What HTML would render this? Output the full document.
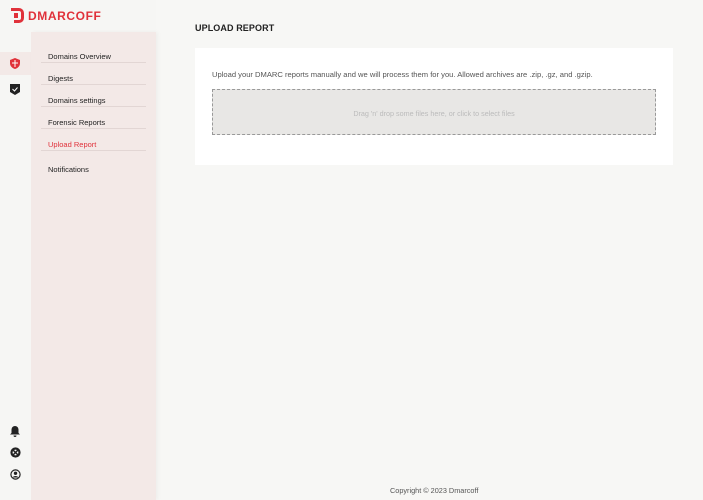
<!DOCTYPE html>
<html><head><meta charset="utf-8"><style>
*{margin:0;padding:0;box-sizing:border-box}
body{width:703px;height:500px;overflow:hidden;background:#f7f7f5;font-family:"Liberation Sans",sans-serif;position:relative;color:#333}
.logo{position:absolute;left:0;top:0;width:156px;height:32px;background:#f6f6f4}
.logo span{position:absolute;left:28px;top:9px;font-size:12px;font-weight:bold;color:#e0313a;letter-spacing:.6px}
.strip{position:absolute;left:0;top:32px;width:31px;height:468px;background:#f6f6f4}
.sub{position:absolute;left:31px;top:32px;width:125px;height:468px;background:#f3e9e7;box-shadow:2px 0 4px rgba(0,0,0,.04)}
.item{position:absolute;left:48px;font-size:7.5px;color:#222}
.line{position:absolute;left:41px;width:105px;height:1px;background:#e2d6d4}
.act{position:absolute;left:0;top:52px;width:31px;height:23px;background:#f3e9e7}
h1{position:absolute;left:195px;top:23px;font-size:9px;font-weight:bold;color:#222;letter-spacing:.1px}
.card{position:absolute;left:195px;top:48px;width:478px;height:117px;background:#fff}
.card p{position:absolute;left:17px;top:22px;font-size:7.6px;color:#555;white-space:nowrap}
.drop{position:absolute;left:17px;top:41px;width:444px;height:46px;background:#e8e7e5;border:1px dashed #999;font-size:7.2px;color:#bbb;text-align:center;line-height:47px}
.foot{position:absolute;left:390px;top:486px;font-size:7.3px;color:#555}
</style></head><body>
<div class="logo">
<svg style="position:absolute;left:11px;top:8px" width="13" height="15" viewBox="0 0 13 15"><path d="M0 0h8a5 5 0 0 1 5 5v5a5 5 0 0 1-5 5H3v-3h5a2 2 0 0 0 2-2V5a2 2 0 0 0-2-2H0z M3 5h4v5H3z" fill="#e0313a"/></svg>
<span>DMARCOFF</span></div>
<div class="strip"></div>
<div class="act"></div>
<svg style="position:absolute;left:10px;top:58px" width="10" height="11" viewBox="0 0 10 11"><path d="M5 0L10 2v3c0 3-2 5-5 6C2 10 0 8 0 5V2z" fill="#e0313a"/><path d="M5 2v7M2 5h6" stroke="#fff" stroke-width="1"/></svg>
<svg style="position:absolute;left:10px;top:84px" width="10" height="11" viewBox="0 0 10 11"><path d="M0 0h10v8l-5 3-5-3z" fill="#222"/><path d="M2.5 5l2 2 3-3.5" stroke="#fff" stroke-width="1" fill="none"/></svg>
<svg style="position:absolute;left:10px;top:426px" width="10" height="11" viewBox="0 0 10 11"><path d="M5 0a3.5 3.5 0 0 1 3.5 3.5V7L10 8.5H0L1.5 7V3.5A3.5 3.5 0 0 1 5 0z M3.5 9.5h3a1.5 1.5 0 0 1-3 0z" fill="#222"/></svg>
<svg style="position:absolute;left:10px;top:447px" width="11" height="11" viewBox="0 0 11 11"><circle cx="5.5" cy="5.5" r="4" fill="none" stroke="#222" stroke-width="2.2"/><path d="M2 2l7 7M9 2L2 9" stroke="#222" stroke-width="1.5"/></svg>
<svg style="position:absolute;left:10px;top:469px" width="11" height="11" viewBox="0 0 11 11"><circle cx="5.5" cy="5.5" r="4.6" fill="none" stroke="#222" stroke-width="1.2"/><circle cx="5.5" cy="4.3" r="1.7" fill="#222"/><path d="M2.5 8.5a3.5 3 0 0 1 6 0z" fill="#222"/></svg>
<div class="sub"></div>
<div class="item" style="top:52px">Domains Overview</div><div class="line" style="top:62px"></div>
<div class="item" style="top:74px">Digests</div><div class="line" style="top:84px"></div>
<div class="item" style="top:96px">Domains settings</div><div class="line" style="top:106px"></div>
<div class="item" style="top:118px">Forensic Reports</div><div class="line" style="top:128px"></div>
<div class="item" style="top:140px;color:#e0313a">Upload Report</div><div class="line" style="top:150px"></div>
<div class="item" style="top:165px">Notifications</div>
<h1>UPLOAD REPORT</h1>
<div class="card"><p>Upload your DMARC reports manually and we will process them for you. Allowed archives are .zip, .gz, and .gzip.</p>
<div class="drop">Drag 'n' drop some files here, or click to select files</div></div>
<div class="foot">Copyright © 2023 Dmarcoff</div>
</body></html>
